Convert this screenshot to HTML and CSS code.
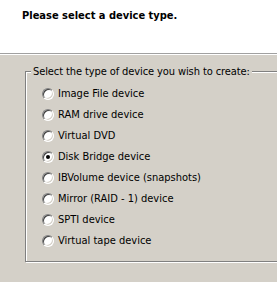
FILE: index.html
```html
<!DOCTYPE html>
<html lang="en">
<head>
    <meta charset="UTF-8">
    <title>New device</title>
    <link rel="stylesheet" href="styles.css">
</head>
<body>
    <div class="header">
        <h1 class="header-title">Please select a device type.</h1>
    </div>

    <div class="content">
        <fieldset class="group">
            <legend>Select the type of device you wish to create:</legend>
            <label class="option"><span class="radio"></span>Image File device</label>
            <label class="option"><span class="radio"></span>RAM drive device</label>
            <label class="option"><span class="radio"></span>Virtual DVD</label>
            <label class="option"><span class="radio checked"></span>Disk Bridge device</label>
            <label class="option"><span class="radio"></span>IBVolume device (snapshots)</label>
            <label class="option"><span class="radio"></span>Mirror (RAID - 1) device</label>
            <label class="option"><span class="radio"></span>SPTI device</label>
            <label class="option"><span class="radio"></span>Virtual tape device</label>
        </fieldset>
    </div>
</body>
</html>
```

FILE: styles.css
```css
/* --- Global Setup --- */
html, body {
    margin: 0;
    padding: 0;
    height: 100%;
    overflow: hidden;
    background-color: #d4d0c8;
    font-family: "DejaVu Sans Condensed", "DejaVu Sans", sans-serif;
    font-size: 11px;
    color: #000;
}

/* --- Header --- */
.header {
    height: 54px;
    background-color: #fff;
    border-bottom: 1px solid #a0a0a0;
    box-shadow: 0 1px 0 #fff;
    padding: 9px 0 0 22px;
    box-sizing: border-box;
}
.header-title {
    margin: 0;
    font-size: 11px;
    font-weight: bold;
    line-height: 13px;
}

/* --- Group box (runs on past the right edge) --- */
.content {
    padding: 11px 0 0 25px;
}

.group {
    height: 197px;
    box-sizing: border-box;
    margin: 0;
    padding: 5px 0 0 16px;
    border: 1px solid #808080;
    border-right: 0;
    box-shadow: inset 1px 1px 0 #fff, 1px 1px 0 #fff;
}
.group legend {
    margin-left: -11px;
    padding: 0 2px;
    line-height: 13px;
    letter-spacing: -0.1px;
    background-color: #d4d0c8;
}

.option {
    display: flex;
    align-items: center;
    gap: 4px;
    height: 21px;
}

.radio {
    width: 12px;
    height: 12px;
    box-sizing: border-box;
    border-radius: 50%;
    background-color: #fff;
    border: 1px solid;
    border-color: #808080 #fff #fff #808080;
    box-shadow: inset 1px 1px 0 #404040, inset -1px -1px 0 #d4d0c8;
    display: flex;
    align-items: center;
    justify-content: center;
}
.radio.checked::after {
    content: '';
    width: 4px;
    height: 4px;
    border-radius: 50%;
    background-color: #000;
}
```
